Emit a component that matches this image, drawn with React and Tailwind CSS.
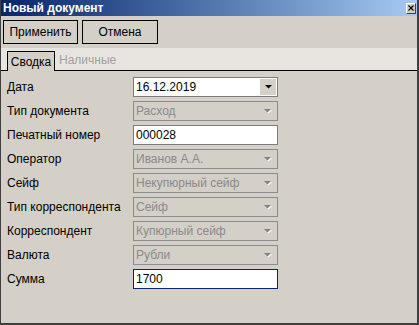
import React from "react";

const font = { fontFamily: '"Liberation Sans", Arial, sans-serif' };

function Arrow({ disabled }) {
  return (
    <div className={"flex h-[16px] w-[16px] items-center justify-center " + (disabled ? "" : "bg-[#d4d0c8]")}>
      <svg width="9" height="6" viewBox="0 0 9 6">
        {disabled && <path d="M2 2 L9 2 L5.5 5.5 Z" fill="#ffffff" />}
        <path d="M1 1 L8 1 L4.5 4.5 Z" fill={disabled ? "#808080" : "#000000"} />
      </svg>
    </div>
  );
}

function Combo({ value, disabled }) {
  if (disabled) {
    return (
      <div className="flex h-[20px] items-center justify-between border border-[#8c8c8c] bg-[#d4d0c8] pl-[2px] pr-[2px] text-[12px] text-[#8a8a8a]">
        <span className="leading-none">{value}</span>
        <Arrow disabled />
      </div>
    );
  }
  return (
    <div className="flex h-[20px] items-center justify-between border border-[#7c7c7c] bg-white pl-[2px] pr-[1px] text-[12px] text-black">
      <span className="leading-none">{value}</span>
      <Arrow />
    </div>
  );
}

function TextBox({ value, focused }) {
  return (
    <div
      className={
        "flex h-[20px] items-center bg-white pl-[2px] text-[12px] text-black border " +
        (focused ? "border-[#0a246a]" : "border-[#7c7c7c]")
      }
    >
      <span className="leading-none">{value}</span>
    </div>
  );
}

const rows = [
  ["Дата", <Combo value="16.12.2019" />],
  ["Тип документа", <Combo value="Расход" disabled />],
  ["Печатный номер", <TextBox value="000028" />],
  ["Оператор", <Combo value="Иванов А.А." disabled />],
  ["Сейф", <Combo value="Некупюрный сейф" disabled />],
  ["Тип корреспондента", <Combo value="Сейф" disabled />],
  ["Корреспондент", <Combo value="Купюрный сейф" disabled />],
  ["Валюта", <Combo value="Рубли" disabled />],
  ["Сумма", <TextBox value="1700" focused />],
];

export default function App() {
  return (
    <div style={font} className="flex h-[325px] w-[419px] flex-col bg-[#d4d0c8] border-l border-r-2 border-b-2 border-l-[#404040] border-r-[#404040] border-b-[#404040]">
      {/* title bar */}
      <div className="flex h-[16px] shrink-0 items-center justify-between bg-gradient-to-r from-[#0a246a] to-[#a6caf0] pl-[2px] pr-[1px]">
        <span className="text-[12px] font-bold leading-none text-white">Новый документ</span>
        <div className="flex h-[11px] w-[10px] items-center justify-center border border-t-white border-l-white border-r-[#404040] border-b-[#404040] bg-[#d4d0c8]">
          <svg width="6" height="6" viewBox="0 0 6 6">
            <path d="M0.5 0.5 L5.5 5.5 M5.5 0.5 L0.5 5.5" stroke="#000" strokeWidth="1.2" />
          </svg>
        </div>
      </div>
      {/* buttons */}
      <div className="flex h-[32px] shrink-0 items-start gap-[4px] pl-[2px] pt-[4px]">
        <button className="flex h-[24px] w-[75px] items-center justify-center border border-black bg-[#d4d0c8] text-[12px] text-black">
          Применить
        </button>
        <button className="flex h-[24px] w-[76px] items-center justify-center border border-black bg-[#d4d0c8] text-[12px] text-black">
          Отмена
        </button>
      </div>
      {/* tabs */}
      <div className="flex h-[23px] shrink-0 items-end bg-[#e8e5e0]">
        <div className="h-[23px] w-[6px] border-b border-black" />
        <div className="flex h-[20px] w-[48px] items-center justify-center border-l border-r border-t border-black bg-[#d4d0c8] text-[12px] text-black">
          Сводка
        </div>
        <div className="flex h-[23px] flex-1 items-center border-b border-black pl-[4px] pt-[2px] text-[12px] text-[#a0a0a0]">
          Наличные
        </div>
      </div>
      {/* form */}
      <div className="grid flex-1 grid-cols-[126px_145px] content-start gap-y-[4px] pl-[6px] pt-[6px]">
        {rows.map(([label, ctrl], i) => (
          <React.Fragment key={i}>
            <div className="flex h-[20px] items-center text-[12px] text-black">{label}</div>
            {ctrl}
          </React.Fragment>
        ))}
      </div>
    </div>
  );
}
